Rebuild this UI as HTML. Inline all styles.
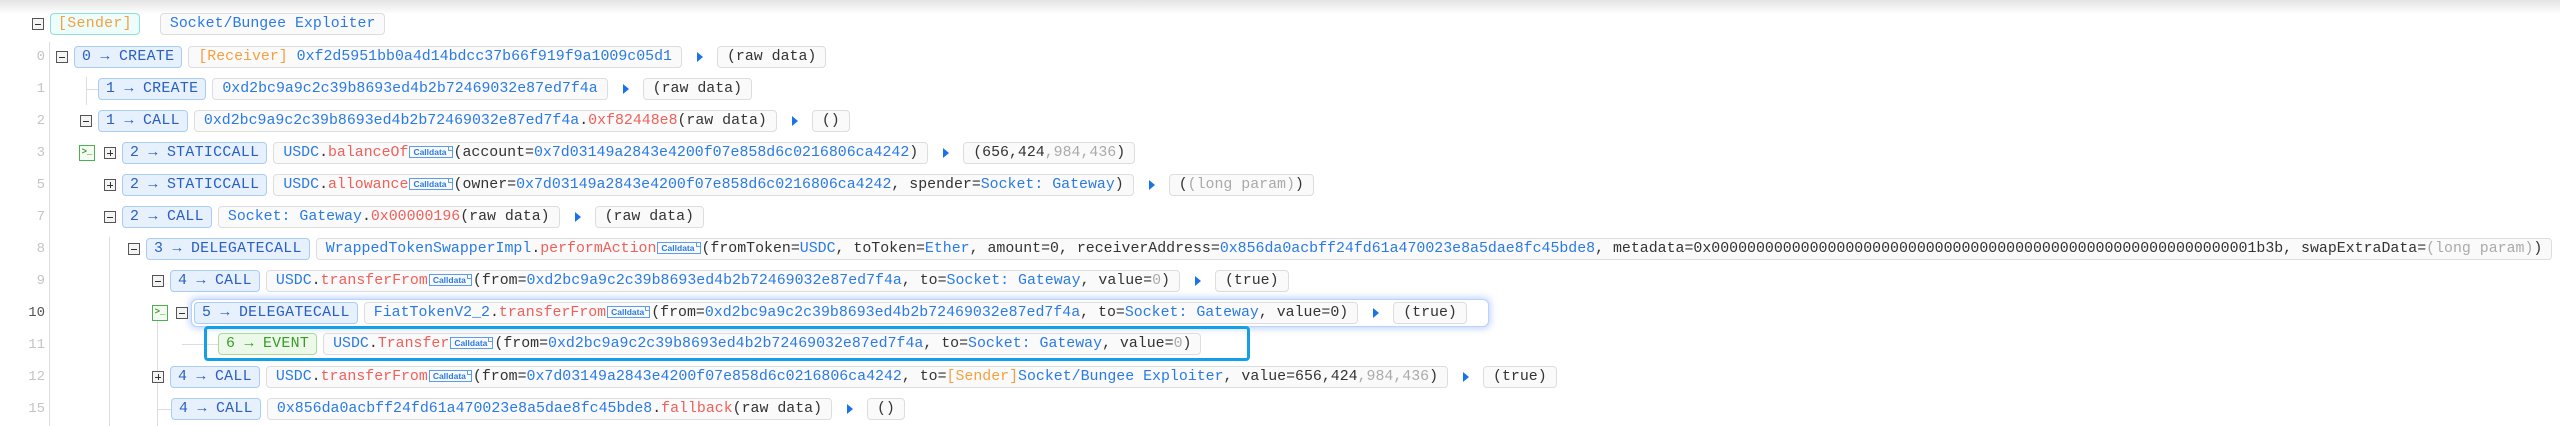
<!DOCTYPE html>
<html><head><meta charset="utf-8"><style>
*{box-sizing:border-box;margin:0;padding:0}
body{width:2560px;height:426px;overflow:hidden;background:#fff;font-family:"Liberation Mono",monospace;font-size:14.9px;color:#333;position:relative}
.top{position:absolute;left:0;top:0;width:2560px;height:14px;background:linear-gradient(#e4e4e4,#fff)}
.row{position:absolute;display:flex;align-items:center;height:22px;white-space:nowrap}
.tg{width:12px;height:12px;border:1px solid #555;background:#f4f4f4;position:relative;margin-right:6px;flex:none}
.tg:before{content:"";position:absolute;left:2px;right:2px;top:4.5px;height:1px;background:#333}
.tg.p:after{content:"";position:absolute;top:2px;bottom:2px;left:4.5px;width:1px;background:#333}
.term{width:16px;height:16px;border:1px solid #4caf50;color:#3a9b2a;font-size:9px;line-height:13px;text-align:center;background:#f3fbf2;flex:none;margin-right:9px;font-weight:bold}
.pill{height:22px;line-height:20px;padding:0 7px;border:1px solid #a9cdf5;background:#e6f1fd;color:#2a5fc0;border-radius:4px;letter-spacing:.3px;flex:none}
.pill.g{border-color:#a5dc9a;background:#ecf9e8;color:#3a9b2a}
.box{height:22px;line-height:20px;padding:0 9px;border:1px solid #ddd;background:#fafafa;border-radius:4px;margin-left:6px;flex:none}
.tri{width:0;height:0;border-top:5px solid transparent;border-bottom:5px solid transparent;border-left:6px solid #1a73e8;margin:0 14px 0 15px;flex:none}
.b{color:#2a7ae6}.r{color:#f0605a}.o{color:#f5a040}.gy{color:#aaa}
.cd{display:inline-block;font-family:"Liberation Sans",sans-serif;font-size:8.5px;font-weight:bold;color:#2a7ae6;border:1px solid #5b9cf0;height:12px;line-height:10px;padding:0 5px 0 3px;vertical-align:1px;margin:0 1px;position:relative}
.cd:after{content:"";position:absolute;right:0;top:0;width:3px;height:3px;border-left:1px solid #5b9cf0;border-bottom:1px solid #5b9cf0}
.ln{position:absolute;width:45px;text-align:right;color:#c4c4c4;font-size:14px;height:22px;line-height:22px}
.vl{position:absolute;width:1px;background:#ddd}
.hl{position:absolute;height:1px;background:#ddd}
</style></head><body>
<div class="top"></div>
<div class="vl" style="left:49px;top:42px;height:384px"></div>
<div class="vl" style="left:86px;top:77px;height:28px"></div>
<div class="hl" style="left:86px;top:89px;width:12px"></div>
<div class="vl" style="left:109px;top:237px;height:189px"></div>
<div class="vl" style="left:157px;top:313px;height:113px"></div>
<div class="hl" style="left:157px;top:409px;width:14px"></div>
<div class="hl" style="left:182px;top:344px;width:36px"></div>

<div class="ln" style="top:46px">0</div>
<div class="ln" style="top:78px">1</div>
<div class="ln" style="top:110px">2</div>
<div class="ln" style="top:142px">3</div>
<div class="ln" style="top:174px">5</div>
<div class="ln" style="top:206px">7</div>
<div class="ln" style="top:238px">8</div>
<div class="ln" style="top:270px">9</div>
<div class="ln" style="top:302px;color:#555">10</div>
<div class="ln" style="top:334px">11</div>
<div class="ln" style="top:366px">12</div>
<div class="ln" style="top:398px">15</div>

<div class="row" style="left:32px;top:13px"><div class="tg"></div><div class="pill" style="background:#ecfdfb;border-color:#8fe0d6;color:#f5a040">[Sender]</div><div class="box" style="margin-left:20px;color:#2a7ae6">Socket/Bungee Exploiter</div></div>

<div class="row" style="left:56px;top:46px"><div class="tg"></div><div class="pill">0 → CREATE</div><div class="box"><span class="o">[Receiver]</span> <span class="b">0xf2d5951bb0a4d14bdcc37b66f919f9a1009c05d1</span></div><div class="tri"></div><div class="box" style="margin:0">(raw data)</div></div>

<div class="row" style="left:98px;top:78px"><div class="pill">1 → CREATE</div><div class="box"><span class="b">0xd2bc9a9c2c39b8693ed4b2b72469032e87ed7f4a</span></div><div class="tri"></div><div class="box" style="margin:0">(raw data)</div></div>

<div class="row" style="left:80px;top:110px"><div class="tg"></div><div class="pill">1 → CALL</div><div class="box"><span class="b">0xd2bc9a9c2c39b8693ed4b2b72469032e87ed7f4a</span>.<span class="r">0xf82448e8</span>(raw data)</div><div class="tri"></div><div class="box" style="margin:0">()</div></div>

<div class="row" style="left:79px;top:142px"><div class="term">&gt;_</div><div class="tg p"></div><div class="pill">2 → STATICCALL</div><div class="box"><span class="b">USDC</span>.<span class="r">balanceOf</span><span class="cd">Calldata</span>(account=<span class="b">0x7d03149a2843e4200f07e858d6c0216806ca4242</span>)</div><div class="tri"></div><div class="box" style="margin:0">(656,424<span class="gy">,984,436</span>)</div></div>

<div class="row" style="left:104px;top:174px"><div class="tg p"></div><div class="pill">2 → STATICCALL</div><div class="box"><span class="b">USDC</span>.<span class="r">allowance</span><span class="cd">Calldata</span>(owner=<span class="b">0x7d03149a2843e4200f07e858d6c0216806ca4242</span>, spender=<span class="b">Socket: Gateway</span>)</div><div class="tri"></div><div class="box" style="margin:0">(<span class="gy">(long param)</span>)</div></div>

<div class="row" style="left:104px;top:206px"><div class="tg"></div><div class="pill">2 → CALL</div><div class="box"><span class="b">Socket: Gateway</span>.<span class="r">0x00000196</span>(raw data)</div><div class="tri"></div><div class="box" style="margin:0">(raw data)</div></div>

<div class="row" style="left:128px;top:238px"><div class="tg"></div><div class="pill">3 → DELEGATECALL</div><div class="box"><span class="b">WrappedTokenSwapperImpl</span>.<span class="r">performAction</span><span class="cd">Calldata</span>(fromToken=<span class="b">USDC</span>, toToken=<span class="b">Ether</span>, amount=0, receiverAddress=<span class="b">0x856da0acbff24fd61a470023e8a5dae8fc45bde8</span>, metadata=0x0000000000000000000000000000000000000000000000000000000000001b3b, swapExtraData=<span class="gy">(long param)</span>)</div></div>

<div class="row" style="left:152px;top:270px"><div class="tg"></div><div class="pill">4 → CALL</div><div class="box"><span class="b">USDC</span>.<span class="r">transferFrom</span><span class="cd">Calldata</span>(from=<span class="b">0xd2bc9a9c2c39b8693ed4b2b72469032e87ed7f4a</span>, to=<span class="b">Socket: Gateway</span>, value=<span class="gy">0</span>)</div><div class="tri"></div><div class="box" style="margin:0">(true)</div></div>

<div style="position:absolute;left:191px;top:299px;width:1298px;height:28px;border:1px solid #b9d3fb;border-radius:6px;box-shadow:0 0 7px 2px rgba(90,140,255,.35);background:#fff"></div>
<div class="term" style="position:absolute;left:152px;top:305px">&gt;_</div>
<div class="row" style="left:176px;top:302px"><div class="tg"></div><div class="pill">5 → DELEGATECALL</div><div class="box"><span class="b">FiatTokenV2_2</span>.<span class="r">transferFrom</span><span class="cd">Calldata</span>(from=<span class="b">0xd2bc9a9c2c39b8693ed4b2b72469032e87ed7f4a</span>, to=<span class="b">Socket: Gateway</span>, value=0)</div><div class="tri"></div><div class="box" style="margin:0">(true)</div></div>

<div style="position:absolute;left:204px;top:326px;width:1046px;height:35px;border:3px solid #14a0e6;border-radius:4px"></div>
<div class="row" style="left:218px;top:333px"><div class="pill g">6 → EVENT</div><div class="box"><span class="b">USDC</span>.<span class="r">Transfer</span><span class="cd">Calldata</span>(from=<span class="b">0xd2bc9a9c2c39b8693ed4b2b72469032e87ed7f4a</span>, to=<span class="b">Socket: Gateway</span>, value=<span class="gy">0</span>)</div></div>

<div class="row" style="left:152px;top:366px"><div class="tg p"></div><div class="pill">4 → CALL</div><div class="box"><span class="b">USDC</span>.<span class="r">transferFrom</span><span class="cd">Calldata</span>(from=<span class="b">0x7d03149a2843e4200f07e858d6c0216806ca4242</span>, to=<span class="o">[Sender]</span><span class="b">Socket/Bungee Exploiter</span>, value=656,424<span class="gy">,984,436</span>)</div><div class="tri"></div><div class="box" style="margin:0">(true)</div></div>

<div class="row" style="left:171px;top:398px"><div class="pill">4 → CALL</div><div class="box"><span class="b">0x856da0acbff24fd61a470023e8a5dae8fc45bde8</span>.<span class="r">fallback</span>(raw data)</div><div class="tri"></div><div class="box" style="margin:0">()</div></div>
</body></html>
